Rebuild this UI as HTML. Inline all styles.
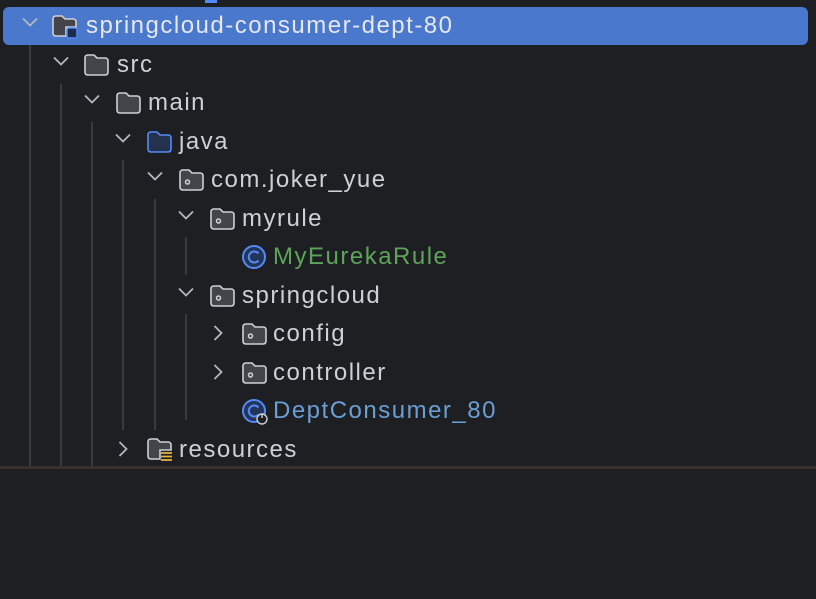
<!DOCTYPE html>
<html><head><style>
html,body{margin:0;padding:0;}
body{width:816px;height:469px;background:#1e1f22;position:relative;overflow:hidden;font-family:"Liberation Sans",sans-serif;}
.sel{position:absolute;left:3px;top:7px;width:805px;height:38px;background:#4a78cc;border-radius:6px;}
.t{position:absolute;font-size:24px;color:#ced0d6;line-height:26px;white-space:nowrap;letter-spacing:1.5px;}
.g{position:absolute;width:2px;background:#393b40;}
svg{position:absolute;overflow:visible;}
.bottom{position:absolute;left:0;top:466px;width:816px;height:3px;background:#3a3029;}
</style></head><body>
<div class="sel"></div>
<div class="g" style="left:29px;top:45px;height:424px"></div>
<div class="g" style="left:60px;top:84px;height:385px"></div>
<div class="g" style="left:91px;top:122px;height:347px"></div>
<div class="g" style="left:122px;top:160px;height:270px"></div>
<div class="g" style="left:154px;top:199px;height:231px"></div>
<div class="g" style="left:185px;top:237px;height:38px"></div>
<div class="g" style="left:185px;top:314px;height:106px"></div>
<div class="bottom"></div>

<svg width="0" height="0">
<defs>
<g id="cd"><path d="M-7 -3.5 L0 3.5 L7 -3.5" fill="none" stroke="#b4b8bf" stroke-width="1.8"/></g>
<g id="cr"><path d="M-3.5 -7 L3.5 0 L-3.5 7" fill="none" stroke="#b4b8bf" stroke-width="1.8"/></g>
<g id="fo"><path d="M1 4 Q1 1 4 1 L10 1 L13 4 L21 4 Q24 4 24 7 L24 18 Q24 21 21 21 L4 21 Q1 21 1 18 Z" fill="#43454a" stroke="#cdd0d6" stroke-width="1.6"/></g>
<g id="fp"><path d="M1 4 Q1 1 4 1 L10 1 L13 4 L21 4 Q24 4 24 7 L24 18 Q24 21 21 21 L4 21 Q1 21 1 18 Z" fill="#43454a" stroke="#cdd0d6" stroke-width="1.6"/><circle cx="8.5" cy="13" r="2" fill="none" stroke="#cdd0d6" stroke-width="1.5"/></g>
<g id="fj"><path d="M1 4 Q1 1 4 1 L10 1 L13 4 L21 4 Q24 4 24 7 L24 18 Q24 21 21 21 L4 21 Q1 21 1 18 Z" fill="#25324d" stroke="#548af7" stroke-width="1.6"/></g>
<g id="cc"><circle cx="12" cy="12" r="11" fill="#233558" stroke="#548af7" stroke-width="2"/><path d="M16.5 8.5 A5.5 5.5 0 1 0 16.5 15.5" fill="none" stroke="#548af7" stroke-width="2"/></g>
</defs></svg>

<svg style="left:30px;top:22px"><use href="#cd"/></svg>
<svg style="left:52px;top:15px" width="26" height="24"><path d="M1 4 Q1 1 4 1 L10 1 L13 4 L21 4 Q24 4 24 7 L24 12 L14 12 L14 21 L4 21 Q1 21 1 18 Z" fill="#43454a" stroke="#cdd0d6" stroke-width="1.6"/><rect x="15" y="13" width="10" height="10" rx="2" fill="#1e2d4e" stroke="#548af7" stroke-width="1.5"/></svg>
<div class="t" style="left:86px;top:13px;color:#e6e8ee">springcloud-consumer-dept-80</div>

<svg style="left:61px;top:61px"><use href="#cd"/></svg>
<svg style="left:84px;top:54px" width="26" height="24"><use href="#fo"/></svg>
<div class="t" style="left:117px;top:52px">src</div>

<svg style="left:92px;top:99px"><use href="#cd"/></svg>
<svg style="left:116px;top:92px" width="26" height="24"><use href="#fo"/></svg>
<div class="t" style="left:148px;top:90px">main</div>

<svg style="left:123px;top:138px"><use href="#cd"/></svg>
<svg style="left:147px;top:131px" width="26" height="24"><use href="#fj"/></svg>
<div class="t" style="left:179px;top:129px">java</div>

<svg style="left:155px;top:176px"><use href="#cd"/></svg>
<svg style="left:179px;top:169px" width="26" height="24"><use href="#fp"/></svg>
<div class="t" style="left:211px;top:167px">com.joker_yue</div>

<svg style="left:186px;top:215px"><use href="#cd"/></svg>
<svg style="left:210px;top:208px" width="26" height="24"><use href="#fp"/></svg>
<div class="t" style="left:242px;top:206px">myrule</div>

<svg style="left:242px;top:245px" width="24" height="24"><use href="#cc"/></svg>
<div class="t" style="left:273px;top:244px;color:#5ea35a">MyEurekaRule</div>

<svg style="left:186px;top:292px"><use href="#cd"/></svg>
<svg style="left:210px;top:285px" width="26" height="24"><use href="#fp"/></svg>
<div class="t" style="left:242px;top:283px">springcloud</div>

<svg style="left:218px;top:333px"><use href="#cr"/></svg>
<svg style="left:242px;top:323px" width="26" height="24"><use href="#fp"/></svg>
<div class="t" style="left:273px;top:321px">config</div>

<svg style="left:218px;top:372px"><use href="#cr"/></svg>
<svg style="left:242px;top:362px" width="26" height="24"><use href="#fp"/></svg>
<div class="t" style="left:273px;top:360px">controller</div>

<svg style="left:242px;top:399px" width="26" height="26"><use href="#cc"/><circle cx="20" cy="20" r="5" fill="#1e1f22" stroke="#cdd0d6" stroke-width="1.4"/><path d="M20 15 L20 19" stroke="#cdd0d6" stroke-width="1.4"/></svg>
<div class="t" style="left:273px;top:398px;color:#6a9fd4">DeptConsumer_80</div>

<svg style="left:123px;top:449px"><use href="#cr"/></svg>
<svg style="left:147px;top:438px" width="26" height="26"><path d="M1 4 Q1 1 4 1 L10 1 L13 4 L21 4 Q24 4 24 7 L24 12 L13 12 L13 21 L4 21 Q1 21 1 18 Z" fill="#43454a" stroke="#cdd0d6" stroke-width="1.6"/><path d="M14 15 H25 M14 18.5 H25 M14 22 H25" stroke="#e8b53a" stroke-width="1.8"/></svg>
<div class="t" style="left:179px;top:437px">resources</div>

<div style="position:absolute;left:205px;top:0;width:12px;height:3px;background:#548af7"></div>
</body></html>
